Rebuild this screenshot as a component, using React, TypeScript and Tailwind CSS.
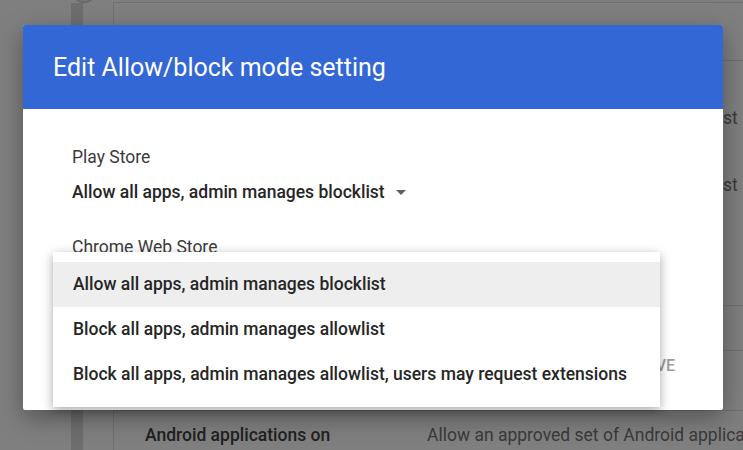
import { useState } from 'react';

const options = [
  'Allow all apps, admin manages blocklist',
  'Block all apps, admin manages allowlist',
  'Block all apps, admin manages allowlist, users may request extensions',
];

const CaretDown = () => (
  <svg viewBox="0 0 24 24" className="h-6 w-6 fill-[#616161]">
    <path d="M7 10l5 5 5-5z" />
  </svg>
);

// the settings page that sits behind the modal scrim
const Background = () => (
  <div className="flex h-full">
    <div className="flex w-[113px] flex-none flex-col">
      <div className="-mt-[25px] ml-[70px] h-[28px] w-[28px] rounded-full border border-[#bdbdbd] bg-[#e6e6e6]" />
      <div className="ml-[71px] w-[12px] flex-1 bg-[#dcdcdc]" />
    </div>
    <div className="mt-[2px] flex-1 border-l border-t border-[#e0e0e0] bg-white text-[17.5px]">
      <div className="flex h-[58px] items-start border-b border-[#e0e0e0] pl-[31px] pt-[19px] text-[#9e9e9e]">
        Allow/block mode
      </div>
      <div className="flex h-[245px] border-b border-[#e0e0e0]">
        <div className="w-[313px] pl-[31px]" />
        <div className="flex flex-col gap-[41px] pt-[44px] whitespace-nowrap text-[#757575]">
          <span>Allow all apps, admin manages blocklist</span>
          <span>Allow all apps, admin manages blocklist</span>
        </div>
      </div>
      <div className="h-[45px] border-b border-[#e0e0e0]" />
      <div className="h-[60px] border-b border-[#e0e0e0]" />
      <div className="flex h-[49px] items-center whitespace-nowrap">
        <div className="w-[313px] pl-[31px] font-medium text-[#424242]">Android applications on</div>
        <div className="text-[#757575]">Allow an approved set of Android applications</div>
      </div>
    </div>
  </div>
);

export default function App() {
  const [selected, setSelected] = useState(0);
  const [hovered, setHovered] = useState(0);

  return (
    <div className="relative h-[450px] w-[743px] overflow-hidden bg-white font-['Roboto','Liberation_Sans',sans-serif]">
      <Background />
      <div className="absolute inset-0 bg-black/50" />

      <div className="absolute left-[23px] top-[25px] flex h-[385px] w-[700px] flex-col rounded-[2px] bg-white shadow-[0_8px_24px_rgba(0,0,0,0.35)]">
        <div className="flex h-[84px] flex-none items-center rounded-t-[2px] bg-[#3367d6] px-[30px] pt-[2px] text-[25px] text-white">
          Edit Allow/block mode setting
        </div>

        <div className="flex-1 pl-[49px] pt-[35px]">
          <div className="text-[17.5px] leading-[26px] text-[#3c3c3c]">Play Store</div>
          <div className="mt-[9px] flex items-center gap-[4px] text-[17.5px] font-medium leading-[26px] text-[#262626]">
            <span>{options[selected]}</span>
            <CaretDown />
          </div>
          <div className="mt-[29px] text-[17.5px] leading-[26px] text-[#3c3c3c]">Chrome Web Store</div>
        </div>

        <div className="flex h-[88px] flex-none items-center justify-end gap-[32px] pr-[48px] text-[16px] font-medium uppercase">
          <span className="text-[#3367d6]">Cancel</span>
          <span className="text-[#9e9e9e]">Save</span>
        </div>

        <ul className="absolute left-[30px] top-[227px] w-[607px] bg-white py-[10px] shadow-[0_3px_10px_rgba(0,0,0,0.35)]">
          {options.map((opt, i) => (
            <li
              key={opt}
              onMouseEnter={() => setHovered(i)}
              onClick={() => setSelected(i)}
              className={`flex h-[45px] cursor-pointer items-center px-[20px] text-[17.5px] font-medium text-[#262626] ${
                hovered === i ? 'bg-[#eeeeee]' : ''
              }`}
            >
              {opt}
            </li>
          ))}
        </ul>
      </div>
    </div>
  );
}
